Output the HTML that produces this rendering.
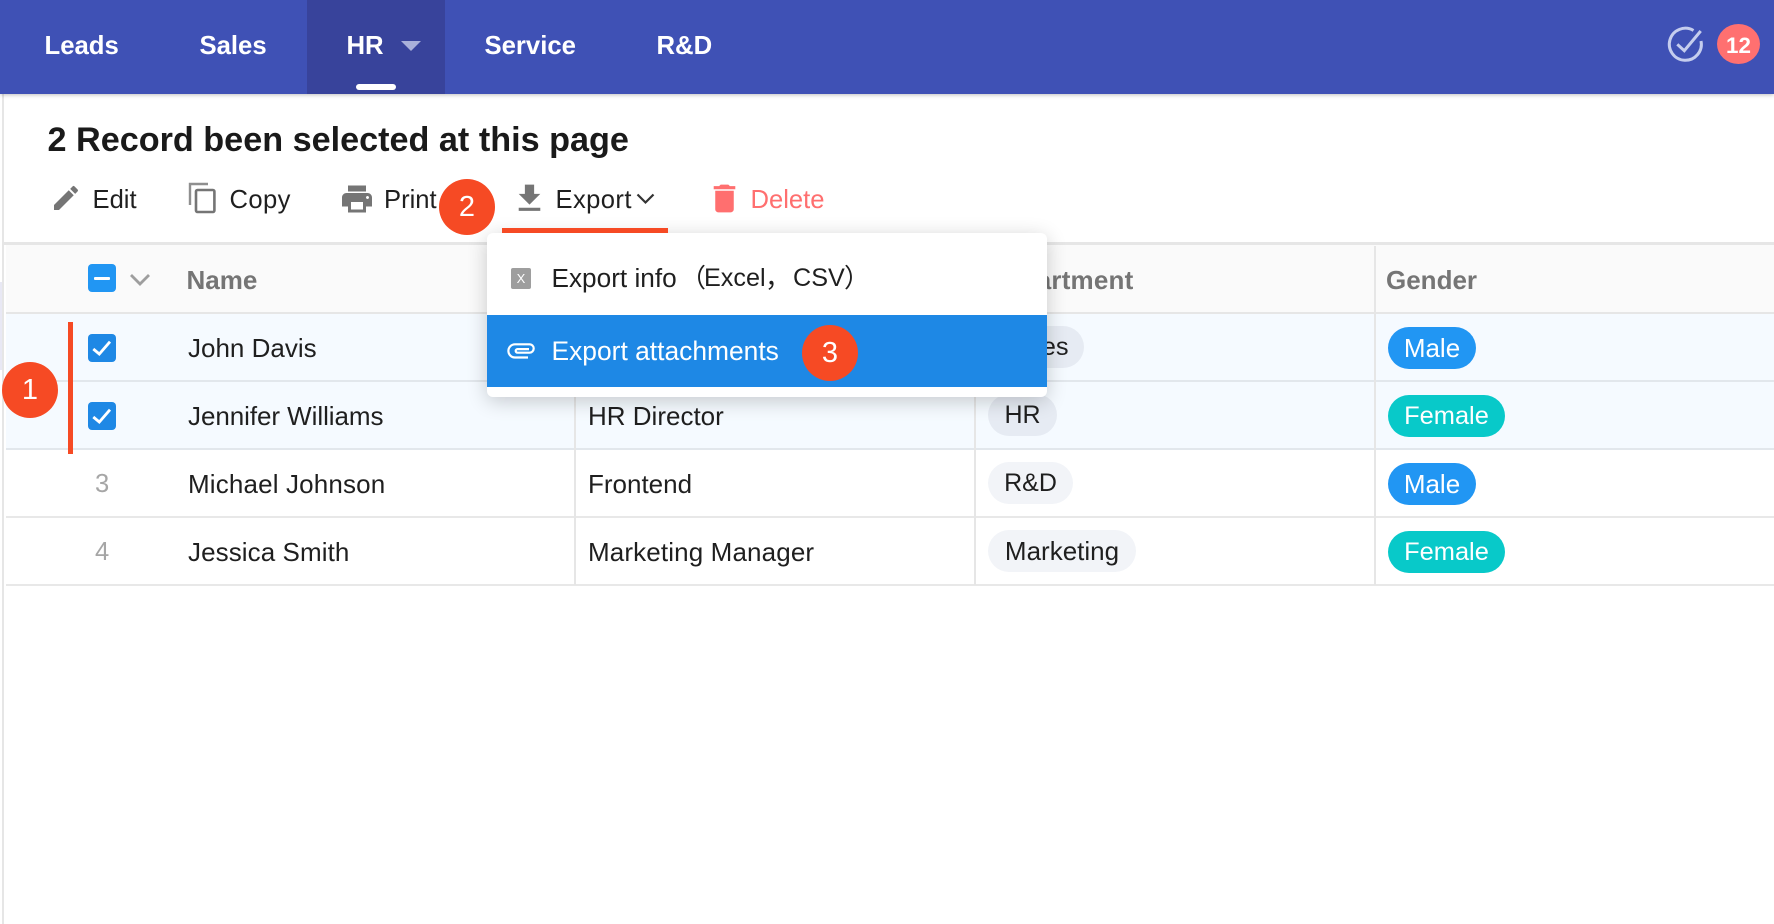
<!DOCTYPE html>
<html lang="en"><head><meta charset="utf-8"><title>Records</title>
<style>
html,body{margin:0;padding:0;background:#fff;width:1774px;height:924px;overflow:hidden}
body{position:relative;font-family:"Liberation Sans","Noto Sans CJK SC",sans-serif;color:#1f1f1f;font-size:26px}
.a{position:absolute}
.t{position:absolute;white-space:nowrap;line-height:40px;height:40px}
.n{color:#fff;font-weight:700;font-size:25.7px;top:26px}
.h{color:#757575;font-weight:700;font-size:26px;top:260px}
.b{font-size:25.6px;top:180px}
svg{position:absolute;overflow:visible}
.line{position:absolute;background:#e6e8eb}
.tag{position:absolute;height:42px;line-height:42px;border-radius:21px;white-space:nowrap;font-size:25.4px;text-align:center}
.m{left:1388px;width:88px;background:#2196f3;color:#fff}
.f{left:1388px;width:117px;background:#08c9c9;color:#fff}
.d{left:988px;background:#f2f4f8}
.ck{position:absolute;left:88px;width:28px;height:28px;border-radius:4px;background:#1e88e5}
.c{position:absolute;width:56px;height:56px;border-radius:50%;background:#f64a24;color:#fff;text-align:center;line-height:56px;font-size:29px}
</style></head><body>

<div class="a" style="left:0;top:282px;width:2px;height:88px;background:#e8e8f4"></div>
<div class="a" style="left:2px;top:94px;width:2px;height:830px;background:#e6e6e6"></div>

<!-- table -->
<div class="a" style="left:6px;top:245px;width:1768px;height:67px;background:#fafafa"></div>
<div class="a" style="left:6px;top:314px;width:1768px;height:134px;background:#f5faff"></div>
<div class="line" style="left:4px;top:242px;width:1770px;height:3px;background:#e6e6e6"></div>
<div class="line" style="left:6px;top:312px;width:1768px;height:2px;background:#e6e6e6"></div>
<div class="line" style="left:6px;top:380px;width:1768px;height:2px;background:#e2e7ec"></div>
<div class="line" style="left:6px;top:448px;width:1768px;height:2px;background:#e2e7ec"></div>
<div class="line" style="left:6px;top:516px;width:1768px;height:2px;background:#e8e8e8"></div>
<div class="line" style="left:6px;top:584px;width:1768px;height:2px;background:#e8e8e8"></div>
<div class="line" style="left:574px;top:246px;width:2px;height:339px;background:#e6e6e6"></div>
<div class="line" style="left:974px;top:246px;width:2px;height:339px;background:#e6e6e6"></div>
<div class="line" style="left:1374px;top:246px;width:2px;height:339px;background:#e6e6e6"></div>

<div class="ck" style="top:264px;background:#2196f3"></div>
<div class="a" style="left:94px;top:277px;width:16px;height:3px;background:#fff;border-radius:1px"></div>
<svg style="left:0;top:0" width="1" height="1"><path d="M131 275l9 9 9-9" fill="none" stroke="#9e9e9e" stroke-width="2.8"/></svg>
<div class="t h" style="left:186.5px">Name</div>
<div class="t h" style="left:987px;letter-spacing:.2px">Department</div>
<div class="t h" style="left:1386px">Gender</div>

<div class="ck" style="top:334px"></div>
<svg style="left:88px;top:333px" width="28" height="28"><path d="M5.300 16l6 5L22 8.700" fill="none" stroke="#fff" stroke-width="2.800"/></svg>
<div class="ck" style="top:402px"></div>
<svg style="left:88px;top:401px" width="28" height="28"><path d="M5.300 16l6 5L22 8.700" fill="none" stroke="#fff" stroke-width="2.800"/></svg>
<div class="t" style="left:95px;top:464px;color:#a6a6a6;font-size:25.6px">3</div>
<div class="t" style="left:95px;top:532px;color:#a6a6a6;font-size:25.6px">4</div>

<div class="t" style="left:188px;top:328px">John Davis</div>
<div class="t" style="left:188px;top:396px;letter-spacing:-.06px">Jennifer Williams</div>
<div class="t" style="left:188px;top:464px;letter-spacing:.15px">Michael Johnson</div>
<div class="t" style="left:188px;top:532px;letter-spacing:.08px">Jessica Smith</div>

<div class="t" style="left:588px;top:396px">HR Director</div>
<div class="t" style="left:588px;top:464px">Frontend</div>
<div class="t" style="left:588px;top:532px;letter-spacing:.13px">Marketing Manager</div>

<div class="tag d" style="top:326px;width:96px;background:#e6ebf3;text-align:left"><span style="margin-left:17px">Sales</span></div>
<div class="tag d" style="top:394px;width:69px;background:#e6ebf3;font-size:25px">HR</div>
<div class="tag d" style="top:462px;width:85px;font-size:25px">R&amp;D</div>
<div class="tag d" style="top:530px;width:148px;font-size:26px">Marketing</div>

<div class="tag m" style="top:327px;font-size:26px">Male</div>
<div class="tag f" style="top:395px">Female</div>
<div class="tag m" style="top:463px;font-size:26px">Male</div>
<div class="tag f" style="top:531px">Female</div>

<!-- nav -->
<div class="a" style="left:0;top:0;width:1774px;height:94px;background:#3f51b5;box-shadow:0 1px 4px rgba(0,0,0,.25)"></div>
<div class="a" style="left:307px;top:0;width:138px;height:94px;background:#38439b"></div>
<div class="a" style="left:356px;top:84px;width:40px;height:6px;border-radius:3px;background:#fff"></div>
<div class="t n" style="left:44.5px">Leads</div>
<div class="t n" style="left:199.5px">Sales</div>
<div class="t n" style="left:346.5px">HR</div>
<svg style="left:0;top:0" width="1" height="1"><path d="M401 41h20l-10 10z" fill="#a9b0da"/></svg>
<div class="t n" style="left:484.5px">Service</div>
<div class="t n" style="left:656.5px">R&amp;D</div>
<svg style="left:0;top:0" width="1" height="1"><path d="M1693.500 30.500A16 16 0 1 0 1701 41" fill="none" stroke="#c5cdee" stroke-width="3"/><path d="M1677.300 44.300l7 6.400L1700.700 31" fill="none" stroke="#c5cdee" stroke-width="3"/></svg>
<div class="a" style="left:1717px;top:24px;width:43px;height:40px;border-radius:50%;background:#ff7070;color:#fff;font-weight:700;font-size:22.400px;line-height:43px;text-align:center">12</div>

<!-- title / toolbar -->
<div class="t" style="left:47.5px;top:120px;font-size:34.2px;font-weight:700;color:#1a1a1a">2 Record been selected at this page</div>

<svg style="left:50px;top:182px" width="32" height="32" viewBox="0 0 24 24"><path fill="#757575" d="M3 17.250V21h3.750L17.810 9.940l-3.750-3.750L3 17.250zM20.710 7.040a1 1 0 0 0 0-1.410l-2.340-2.340a1 1 0 0 0-1.410 0l-1.830 1.830 3.750 3.750 1.830-1.830z"/></svg>
<div class="t b" style="left:92.5px">Edit</div>

<svg style="left:0;top:0" width="1" height="1"><path d="M190 205V184h18" fill="none" stroke="#8f8f8f" stroke-width="2.400"/><rect x="196" y="190" width="18.400" height="22" rx="1.500" fill="none" stroke="#757575" stroke-width="2.600"/></svg>
<div class="t b" style="left:229.5px;letter-spacing:.4px">Copy</div>

<svg style="left:339px;top:180.5px" width="36" height="36" viewBox="0 0 24 24"><path fill="#757575" d="M19 8H5c-1.660 0-3 1.340-3 3v6h4v4h12v-4h4v-6c0-1.660-1.340-3-3-3zm-3 11H8v-5h8v5zm3-7c-.55 0-1-.45-1-1s.45-1 1-1 1 .45 1 1-.45 1-1 1zm-1-9H6v4h12V3z"/></svg>
<div class="t b" style="left:384px">Print</div>

<svg style="left:511px;top:180.4px" width="37" height="37" viewBox="0 0 24 24"><path fill="#757575" d="M19 9h-4V3H9v6H5l7 7 7-7zM5 18v2h14v-2H5z"/></svg>
<div class="t b" style="left:555.5px;letter-spacing:.4px">Export</div>
<svg style="left:0;top:0" width="1" height="1"><path d="M637.500 194.500l8 8 8-8" fill="none" stroke="#333" stroke-width="2.200"/></svg>

<svg style="left:706px;top:180px" width="37" height="37" viewBox="0 0 24 24"><path fill="#ff6f6f" d="M6 19c0 1.100.9 2 2 2h8c1.100 0 2-.9 2-2V7H6v12zM19 4h-3.500l-1-1h-5l-1 1H5v2h14V4z"/></svg>
<div class="t b" style="left:750.5px;color:#ff6f6f">Delete</div>

<!-- dropdown -->
<div class="a" style="left:487px;top:233px;width:560px;height:164px;background:#fff;border-radius:6px;box-shadow:0 4px 20px rgba(0,0,0,.2)"></div>
<div class="a" style="left:487px;top:315px;width:560px;height:72px;background:#1e88e5"></div>
<div class="a" style="left:511px;top:268px;width:20px;height:21px;border-radius:2px;background:#9e9e9e;color:#fff;font-size:13px;line-height:21px;text-align:center">X</div>
<div class="t" style="left:551.5px;top:258px;font-size:26.2px">Export info</div>
<div class="t" style="left:680px;top:258px;font-size:26px">（</div>
<div class="t" style="left:704px;top:258px;font-size:25.2px">Excel</div>
<div class="t" style="left:765px;top:258px;font-size:26px">，</div>
<div class="t" style="left:793px;top:258px;font-size:25.2px">CSV</div>
<div class="t" style="left:844px;top:258px;font-size:26px">）</div>
<svg style="left:507px;top:343px" width="28" height="16"><path d="M21 14.500H8A6.600 6.600 0 0 1 8 1.300H22.500A4.200 4.200 0 0 1 22.500 9.700H10.500A1.800 1.800 0 0 1 10.500 6.100H22" fill="none" stroke="#fff" stroke-width="2.200"/></svg>
<div class="t" style="left:551.5px;top:331px;font-size:26.4px;color:#fff">Export attachments</div>
<div class="a" style="left:502px;top:228px;width:166px;height:5px;background:#f64a24"></div>

<!-- callouts -->
<div class="a" style="left:68px;top:322px;width:5px;height:132px;background:#f64a24"></div>
<div class="c" style="left:2px;top:362px">1</div>
<div class="c" style="left:439px;top:179px">2</div>
<div class="c" style="left:802px;top:325px">3</div>
</body></html>
